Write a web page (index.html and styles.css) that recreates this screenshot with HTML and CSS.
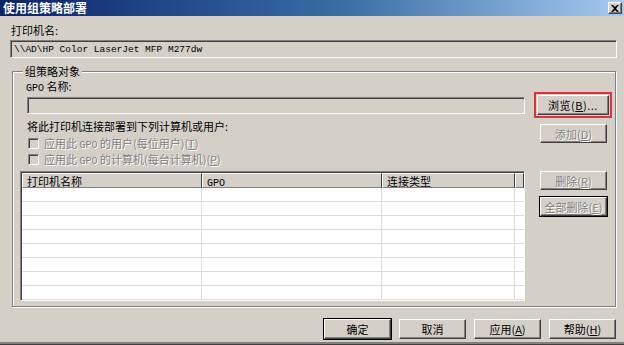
FILE: index.html
```html
<!DOCTYPE html>
<html lang="zh-CN">

<head>
    <meta charset="UTF-8">
    <meta name="viewport" content="width=device-width, initial-scale=1.0">
    <title>使用组策略部署</title>
    <link rel="stylesheet" href="styles.css">
</head>

<body>
    <div class="window">
        <!-- Title bar -->
        <div class="titlebar">
            <span class="title">使用组策略部署</span>
            <span class="close">
                <svg width="8" height="7" viewBox="0 0 8 7">
                    <path d="M0 0h2l2 2 2-2h2L5 3.5 8 7H6L4 5 2 7H0l3-3.5z" fill="#000"/>
                </svg>
            </span>
        </div>

        <div class="content">
            <div class="label">打印机名:</div>
            <div class="field printer-name">\\AD\HP Color LaserJet MFP M277dw</div>

            <!-- Group policy object group box -->
            <fieldset class="group">
                <legend>组策略对象</legend>
                <div class="group-body">
                    <div class="group-left">
                        <div class="label gpo-label"><span class="latin">GPO</span> 名称:</div>
                        <div class="field gpo-field"></div>
                        <div class="label deploy-label">将此打印机连接部署到下列计算机或用户:</div>
                        <div class="check disabled">
                            <span class="box"></span>
                            <span>应用此 <span class="latin">GPO</span> 的用户(每位用户)(<u>T</u>)</span>
                        </div>
                        <div class="check disabled">
                            <span class="box"></span>
                            <span>应用此 <span class="latin">GPO</span> 的计算机(每台计算机)(<u>P</u>)</span>
                        </div>

                        <div class="list">
                            <table>
                                <thead>
                                    <tr>
                                        <th class="col-name">打印机名称</th>
                                        <th class="col-gpo"><span class="latin">GPO</span></th>
                                        <th class="col-type">连接类型</th>
                                        <th class="col-fill"></th>
                                    </tr>
                                </thead>
                                <tbody>
                                    <tr><td></td><td></td><td></td><td></td></tr>
                                    <tr><td></td><td></td><td></td><td></td></tr>
                                    <tr><td></td><td></td><td></td><td></td></tr>
                                    <tr><td></td><td></td><td></td><td></td></tr>
                                    <tr><td></td><td></td><td></td><td></td></tr>
                                    <tr><td></td><td></td><td></td><td></td></tr>
                                    <tr><td></td><td></td><td></td><td></td></tr>
                                    <tr><td></td><td></td><td></td><td></td></tr>
                                </tbody>
                            </table>
                        </div>
                    </div>

                    <div class="group-right">
                        <div class="highlight">
                            <button class="btn browse">浏览(<u>B</u>)...</button>
                        </div>
                        <button class="btn add" disabled>添加(<u>D</u>)</button>
                        <button class="btn remove" disabled>删除(<u>R</u>)</button>
                        <button class="btn remove-all" disabled>全部删除(<u>E</u>)</button>
                    </div>
                </div>
            </fieldset>

            <!-- Dialog buttons -->
            <div class="footer">
                <button class="btn default">确定</button>
                <button class="btn">取消</button>
                <button class="btn">应用(<u>A</u>)</button>
                <button class="btn">帮助(<u>H</u>)</button>
            </div>
        </div>
    </div>
</body>

</html>
```

FILE: styles.css
```css
/* Windows classic dialog look */
body {
    margin: 0;
    padding: 0;
    background-color: #d4d0c8;
    font-family: "Noto Sans CJK SC", sans-serif;
    font-size: 11px;
    line-height: 12px;
    color: #000;
}

/* Latin words inside Chinese labels */
.latin {
    font-family: "Liberation Mono", monospace;
    font-size: 10px;
    line-height: 0;
}

.window {
    width: 624px;
    height: 345px;
    box-sizing: border-box;
    overflow: hidden;
    border-bottom: 1px solid #404040;
    box-shadow: inset 0 -2px 0 #808080;
}

.titlebar {
    display: flex;
    align-items: center;
    justify-content: space-between;
    height: 16px;
    padding: 0 2px 0 3px;
    background: linear-gradient(to right, #0a246a 0%, #3a6ea5 55%, #a6caf0 100%);
}

.title {
    color: white;
    font-weight: bold;
    font-size: 12px;
    line-height: 14px;
}

.close {
    display: flex;
    align-items: center;
    justify-content: center;
    width: 14px;
    height: 12px;
    box-sizing: border-box;
    background-color: #d4d0c8;
    border: 1px solid;
    border-color: #fff #404040 #404040 #fff;
    box-shadow: inset -1px -1px 0 #808080;
}

.content {
    padding: 8px 7px 0 10px;
}

.label {
    height: 12px;
    padding-left: 1px;
}

/* Sunken read-only text field */
.field {
    height: 18px;
    box-sizing: border-box;
    border: 1px solid;
    border-color: #808080 #fff #fff #808080;
    box-shadow: inset 1px 1px 0 #404040;
    background-color: #d4d0c8;
}

.printer-name {
    margin-top: 4px;
    padding: 3px 0 0 3px;
    font-family: "Liberation Mono", monospace;
    font-size: 9.5px;
    line-height: 11px;
}

/* Etched group box */
.group {
    margin: 7px 1px 0 2px;
    padding: 3px 5px 5px 7px;
    border: 1px solid #808080;
    box-shadow: 1px 1px 0 #fff, inset 1px 1px 0 #fff;
    min-width: 0;
}

.group legend {
    margin-left: 3px;
    padding: 0 2px;
    background-color: #d4d0c8;
    line-height: 12px;
}

.group-body {
    display: flex;
}

.group-left {
    width: 505px;
}

.gpo-label {
    padding-left: 6px;
}

.gpo-field {
    margin: 5px 0 0 7px;
    height: 17px;
}

.deploy-label {
    margin-top: 6px;
    padding-left: 7px;
}

.check {
    display: flex;
    align-items: center;
    gap: 5px;
    height: 12px;
    margin-top: 4px;
    padding-left: 8px;
    white-space: nowrap;
}

.deploy-label + .check {
    margin-top: 5px;
}

.check .box {
    width: 11px;
    height: 11px;
    box-sizing: border-box;
    border: 1px solid;
    border-color: #808080 #fff #fff #808080;
    box-shadow: inset 1px 1px 0 #404040;
    background-color: #d4d0c8;
}

.disabled,
.btn:disabled {
    color: #808080;
    text-shadow: 1px 1px 0 #fff;
}

/* List view */
.list {
    margin-top: 6px;
    height: 130px;
    box-sizing: border-box;
    overflow: hidden;
    border: 1px solid;
    border-color: #808080 #fff #fff #808080;
    box-shadow: inset 1px 1px 0 #404040;
    padding: 1px 0 0 1px;
    background-color: white;
}

.list table {
    width: 502px;
    table-layout: fixed;
    border-collapse: separate;
    border-spacing: 0;
}

.list th {
    height: 15px;
    padding: 0 0 0 4px;
    box-sizing: border-box;
    text-align: left;
    font-weight: normal;
    line-height: 12px;
    background-color: #d4d0c8;
    border: 1px solid;
    border-color: #fff #404040 #808080 #fff;
    white-space: nowrap;
    overflow: hidden;
}

.list .col-name {
    width: 180px;
}

.list .col-gpo {
    width: 180px;
}

.list .col-type {
    width: 133px;
}

.list td {
    height: 14px;
    padding: 0;
    box-sizing: border-box;
    border-bottom: 1px solid #dcdcdc;
    border-right: 1px solid #dcdcdc;
}

.list td:last-child {
    border-right: none;
}

.group-right {
    display: flex;
    flex-direction: column;
    margin-left: 9px;
}

/* Classic raised push button */
.btn {
    width: 67px;
    height: 20px;
    padding: 0;
    font-family: "Noto Sans CJK SC", sans-serif;
    font-size: 11px;
    line-height: 12px;
    color: #000;
    background-color: #d4d0c8;
    border: 1px solid;
    border-color: #fff #404040 #404040 #fff;
    box-shadow: inset -1px -1px 0 #808080;
}

.highlight {
    margin-top: 12px;
    padding: 1px;
    border: 2px solid #e0303a;
    width: 72px;
}

.btn.browse {
    width: 72px;
    letter-spacing: 0.5px;
}

.group-right > .btn {
    margin-left: 6px;
    height: 19px;
}

.btn.add {
    margin-top: 6px;
}

.btn.remove {
    margin-top: 28px;
}

.btn.remove-all {
    margin-top: 7px;
    outline: 1px solid #000;
}

.footer {
    display: flex;
    justify-content: flex-end;
    gap: 8px;
    margin-top: 12px;
    padding-right: 1px;
}

.btn.default {
    outline: 1px solid #000;
}
```
